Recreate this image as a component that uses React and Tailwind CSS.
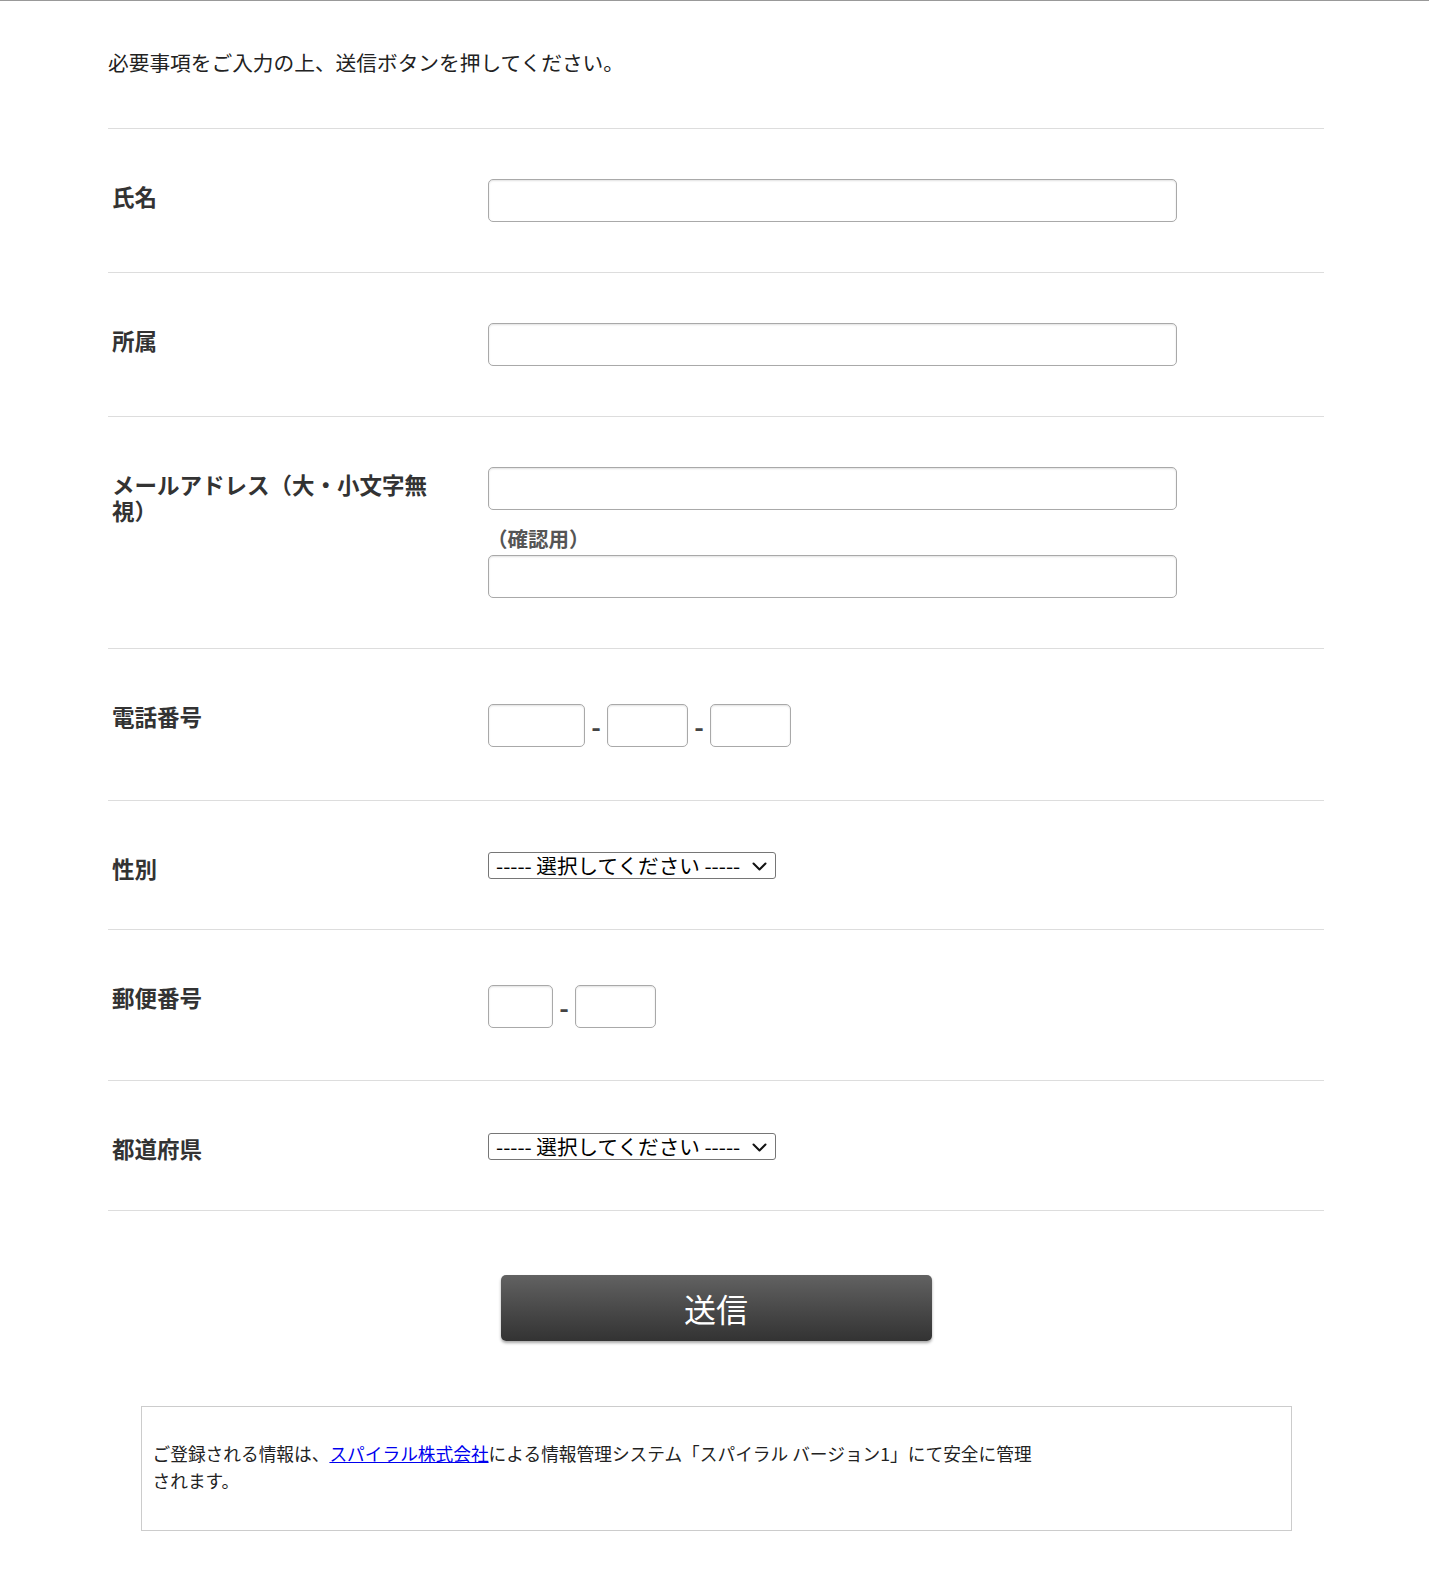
const font = { fontFamily: '"Noto Sans CJK JP", "Noto Sans", sans-serif' };

function TextInput({ className = "" }) {
  return (
    <input
      type="text"
      className={`h-[43px] bg-white border border-[#a9a9a9] rounded-[5px] shadow-[inset_0_1px_2px_rgba(0,0,0,0.12)] px-2 text-[18px] outline-none ${className}`}
    />
  );
}

function Dash() {
  return <span className="w-[22px] text-center text-[26px] leading-none font-bold text-[#444]">-</span>;
}

function SelectBox() {
  return (
    <div className="relative w-[288px] h-[27px]">
      <select className="appearance-none w-full h-full bg-white border border-[#767676] rounded-[3px] pl-[7px] pr-8 text-[20.6px] leading-none text-black">
        <option>----- 選択してください -----</option>
      </select>
      <svg
        className="absolute right-[9px] top-[10px] pointer-events-none"
        width="15"
        height="9"
        viewBox="0 0 15 9"
        fill="none"
      >
        <polyline points="1.5,1.5 7.5,7.5 13.5,1.5" stroke="#111" strokeWidth="2" strokeLinecap="round" strokeLinejoin="round" />
      </svg>
    </div>
  );
}

function Row({ label, fieldClass, children }) {
  return (
    <div className="flex border-b border-[#dddddd]">
      <div className="w-[380px] shrink-0 pl-[4px] pr-[46px] pt-[54px] text-[22.5px] leading-[26px] font-bold text-[#333]">
        {label}
      </div>
      <div className={fieldClass}>{children}</div>
    </div>
  );
}

export default function App() {
  return (
    <div className="min-h-screen bg-white border-t border-[#999999] pb-[43px]" style={font}>
      <div className="w-[1216px] ml-[108px]">
        <p className="pt-[46px] pb-[51px] text-[20.7px] leading-[30px] text-[#222] border-b border-[#dddddd]">
          必要事項をご入力の上、送信ボタンを押してください。
        </p>

        <Row label="氏名" fieldClass="pt-[50px] pb-[50px]">
          <TextInput className="w-[689px]" />
        </Row>

        <Row label="所属" fieldClass="pt-[50px] pb-[50px]">
          <TextInput className="w-[689px]" />
        </Row>

        <Row label="メールアドレス（大・小文字無視）" fieldClass="pt-[50px] pb-[50px] flex flex-col">
          <TextInput className="w-[689px]" />
          <span className="pt-[13px] pb-[2px] text-[20.5px] leading-[30px] font-bold text-[#555] -ml-[1px]">
            （確認用）
          </span>
          <TextInput className="w-[689px]" />
        </Row>

        <Row label="電話番号" fieldClass="pt-[55px] pb-[53px] flex items-center">
          <TextInput className="w-[97px]" />
          <Dash />
          <TextInput className="w-[81px]" />
          <Dash />
          <TextInput className="w-[81px]" />
        </Row>

        <Row label="性別" fieldClass="pt-[51px] pb-[50px]">
          <SelectBox />
        </Row>

        <Row label="郵便番号" fieldClass="pt-[55px] pb-[52px] flex items-center">
          <TextInput className="w-[65px]" />
          <Dash />
          <TextInput className="w-[81px]" />
        </Row>

        <Row label="都道府県" fieldClass="pt-[52px] pb-[50px]">
          <SelectBox />
        </Row>

        <div className="pt-[64px] flex justify-center">
          <button className="w-[431px] h-[66px] rounded-[5px] bg-gradient-to-b from-[#626262] to-[#333333] shadow-[0_2px_3px_rgba(0,0,0,0.35)] text-white text-[32px] leading-none">
            送信
          </button>
        </div>

        <div className="mt-[65px] w-[1151px] mx-auto border border-[#cccccc] pl-[11px] pt-[33px] pb-[36px] text-[17.7px] leading-[27px] text-[#222]">
          ご登録される情報は、
          <a href="#" className="text-[#0000ee] underline">
            スパイラル株式会社
          </a>
          による情報管理システム「スパイラル バージョン1」にて安全に管理
          <br />
          されます。
        </div>
      </div>
    </div>
  );
}
